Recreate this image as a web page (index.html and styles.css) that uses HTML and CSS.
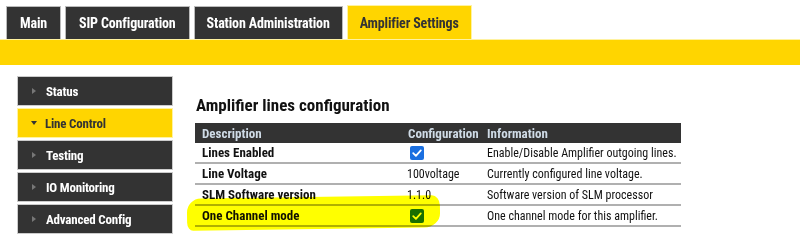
FILE: index.html
```html
<!DOCTYPE html>
<html>
<head>
<meta charset="utf-8">
<link rel="stylesheet" href="styles.css">
</head>
<body>
<nav class="tabs">
  <div class="tab">Main</div>
  <div class="tab">SIP Configuration</div>
  <div class="tab">Station Administration</div>
  <div class="tab active">Amplifier Settings</div>
</nav>
<div class="bar"></div>
<div class="content">
  <aside class="side">
    <div class="item"><span class="arr"></span>Status</div>
    <div class="item active"><span class="arr down"></span>Line Control</div>
    <div class="item"><span class="arr"></span>Testing</div>
    <div class="item"><span class="arr"></span>IO Monitoring</div>
    <div class="item"><span class="arr"></span>Advanced Config</div>
  </aside>
  <main class="main">
    <h2 class="title">Amplifier lines configuration</h2>
    <div class="tablewrap">
      <table class="cfg">
        <colgroup><col class="w1"><col class="w2"><col class="w3"></colgroup>
        <thead>
          <tr><th class="c1">Description</th><th class="c2">Configuration</th><th class="c3">Information</th></tr>
        </thead>
        <tbody>
          <tr><td class="d">Lines Enabled</td><td><span class="cb"><svg viewBox="0 0 14 14" width="14" height="14"><rect x="0" y="0" width="14" height="14" rx="2" fill="#1a6fe0"/><path d="M3.2 7.2 L5.9 9.8 L10.8 4.4" fill="none" stroke="#fff" stroke-width="1.8" stroke-linecap="round" stroke-linejoin="round"/></svg></span></td><td>Enable/Disable Amplifier outgoing lines.</td></tr>
          <tr><td class="d">Line Voltage</td><td>100voltage</td><td>Currently configured line voltage.</td></tr>
          <tr><td class="d">SLM Software version</td><td>1.1.0</td><td>Software version of SLM processor</td></tr>
          <tr><td class="d">One Channel mode</td><td><span class="cb"><svg viewBox="0 0 14 14" width="14" height="14"><rect x="0" y="0" width="14" height="14" rx="2" fill="#1a6fe0"/><path d="M3.2 7.2 L5.9 9.8 L10.8 4.4" fill="none" stroke="#fff" stroke-width="1.8" stroke-linecap="round" stroke-linejoin="round"/></svg></span></td><td>One channel mode for this amplifier.</td></tr>
        </tbody>
      </table>
      <div class="marker"></div>
    </div>
  </main>
</div>
</body>
</html>
```
FILE: styles.css
```css
html, body {
  margin: 0;
  padding: 0;
  background: #fff;
  font-family: "Roboto Condensed", "DejaVu Sans Condensed", Roboto, sans-serif;
  overflow: hidden;
}
.tabs {
  display: flex;
  gap: 4px;
  padding: 5px 0 0 6px;
  height: 39px;
  box-sizing: border-box;
}
.tab {
  background: #333;
  color: #fff;
  font-weight: bold;
  font-size: 14px;
  letter-spacing: -0.15px;
  border: 1px solid #bbb;
  border-bottom: none;
  padding: 0 13px;
  margin-top: 1px;
  display: flex;
  align-items: center;
}
.tab:nth-child(3) { padding: 0 12px; }
.tab.active {
  background: #ffd500;
  color: #333;
  border-color: #fff3a0;
  margin-top: 0;
  padding: 0 12px;
}
.bar {
  height: 25px;
  background: #ffd500;
  border-top: 1px solid #fff2a0;
}
.content {
  display: flex;
  padding: 11px 0 0 17px;
}
.side {
  width: 156px;
  display: flex;
  flex-direction: column;
  gap: 2px;
}
.item {
  height: 28px;
  background: #333;
  border: 1px solid #ccc;
  color: #fff;
  font-weight: bold;
  font-size: 13px;
  letter-spacing: -0.2px;
  display: flex;
  align-items: center;
  padding-left: 13px;
}
.item.active {
  background: #ffd500;
  color: #333;
  border-color: #fff3a0;
}
.arr {
  width: 0;
  height: 0;
  border-top: 3.5px solid transparent;
  border-bottom: 3.5px solid transparent;
  border-left: 4px solid #777;
  margin-right: 10px;
  margin-left: 1px;
}
.arr.down {
  border-left: 3.5px solid transparent;
  border-right: 3.5px solid transparent;
  border-top: 4px solid #333;
  border-bottom: none;
  margin-left: 0;
  margin-right: 8px;
}
.main {
  margin-left: 22px;
}
.title {
  margin: 19px 0 8px 1px;
  font-size: 17px;
  font-weight: bold;
  color: #111;
  line-height: 20px;
}
.tablewrap {
  position: relative;
}
.cfg {
  border-collapse: collapse;
  table-layout: fixed;
  width: 486px;
  font-size: 12px;
  color: #111;
}
.w1 { width: 210px; }
.w2 { width: 78px; }
.w3 { width: 198px; }
.cfg th {
  background: #333;
  color: #cfdbe6;
  text-align: left;
  font-weight: bold;
  font-size: 13px;
  height: 20px;
  padding: 0 0 0 7px;
}
.cfg th.c2 { padding-left: 3px; }
.cfg th.c3 { padding-left: 4px; }
.cfg td {
  height: 19px;
  padding: 0 0 0 2px;
  border-bottom: 2px solid #b0b0b0;
  white-space: nowrap;
  overflow: hidden;
}
.cfg td:nth-child(3) { padding-left: 4px; }
.cfg td.d {
  font-weight: bold;
  font-size: 13px;
  padding-left: 7px;
}
.cb {
  display: inline-block;
  margin-left: 3px;
  vertical-align: middle;
  line-height: 0;
}
.marker {
  position: absolute;
  left: -8px;
  top: 74px;
  width: 253px;
  height: 32px;
  background: #ffff00;
  border-radius: 14px 8px 16px 6px / 14px 10px 14px 8px;
  mix-blend-mode: multiply;
  transform: rotate(-0.8deg);
}
```
